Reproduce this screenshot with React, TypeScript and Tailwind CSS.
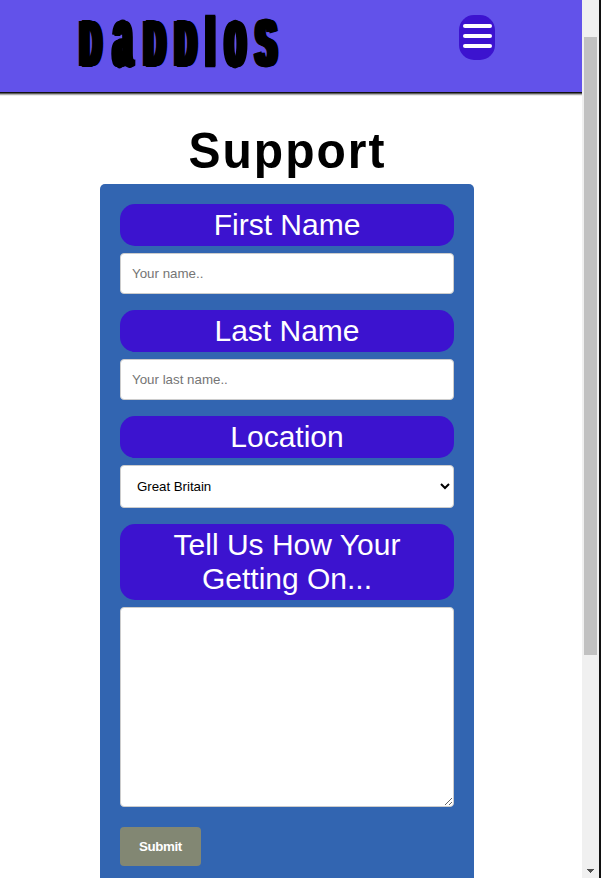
import React from "react";

const heavy =
  "inline-block shrink-0 origin-[50%_51px] text-[60px] leading-[60px] font-bold [-webkit-text-stroke:2px_#000]";
const spread8 =
  "[text-shadow:-2px_0_#000,2px_0_#000,-4px_0_#000,4px_0_#000,-6px_0_#000,6px_0_#000,-7.5px_0_#000,7.5px_0_#000]";
const spread6 =
  "[text-shadow:-2px_0_#000,2px_0_#000,-4px_0_#000,4px_0_#000,-5.5px_0_#000,5.5px_0_#000]";
const spread1 = "[text-shadow:-1px_0_#000,1px_0_#000]";

const letters = [
  { ch: "D", cell: "w-[25px]", shape: `${spread8} scale-x-[0.47] scale-y-[1.085]` },
  { ch: "a", cell: "ml-[6.5px] w-[25px]", shape: `${spread6} scale-x-[0.565] scale-y-[1.4]` },
  { ch: "D", cell: "ml-[7px] w-[25px]", shape: `${spread8} scale-x-[0.47] scale-y-[1.085]` },
  { ch: "D", cell: "ml-[6.5px] w-[25px]", shape: `${spread8} scale-x-[0.47] scale-y-[1.085]` },
  { ch: "I", cell: "ml-[6px] w-[12px]", shape: `${spread1} scale-x-[0.96] scale-y-[1.2]` },
  { ch: "o", cell: "ml-[6px] w-[25px]", shape: `${spread6} scale-x-[0.56] scale-y-[1.4]` },
  { ch: "S", cell: "ml-[6.5px] w-[25px]", shape: `${spread8} scale-x-[0.49] scale-y-[1.1]` },
];

function Logo() {
  return (
    <div className="flex pt-4 pl-[78.5px]">
      {letters.map((l, i) => (
        <span key={i} className={`flex justify-center ${l.cell}`}>
          <span className={`${heavy} ${l.shape}`}>{l.ch}</span>
        </span>
      ))}
    </div>
  );
}

function Label({ children, htmlFor }: { children: React.ReactNode; htmlFor: string }) {
  return (
    <label
      htmlFor={htmlFor}
      className="block rounded-[15px] bg-[#3c13cf] px-10 py-1 text-center text-[30px] leading-[34px] text-white"
    >
      {children}
    </label>
  );
}

const field =
  "mt-[7px] mb-4 block w-full rounded-[4px] border border-[#ccc] bg-white text-[13.333px] outline-none";

export default function App() {
  return (
    <div className="flex h-[878px] w-[601px] overflow-hidden bg-white font-['Liberation_Sans',Arial,sans-serif] text-black">
      <div className="h-full w-[582px] shrink-0">
        <header className="flex h-[92px] items-start justify-between bg-[#6252ea] pr-[87px] shadow-[0_1px_0_#111,0_2px_0_#5c5c5c,0_3px_0_#b0b0b0,0_4px_0_#ececec]">
          <Logo />
          <button
            aria-label="Menu"
            className="mt-[15px] flex h-[45px] w-9 flex-col items-center gap-[6px] rounded-[15px] bg-[#3c13cf] pt-[9px]"
          >
            <span className="h-1 w-[29px] rounded-[2px] bg-white" />
            <span className="h-1 w-[29px] rounded-[2px] bg-white" />
            <span className="h-1 w-[29px] rounded-[2px] bg-white" />
          </button>
        </header>
        <main className="ml-[100px] w-[374px] pt-[31px]">
          <h1 className="h-[61px] origin-[50%_46px] scale-y-[1.04] pl-px text-center text-[48px] leading-[57px] font-bold tracking-[2px] whitespace-nowrap">
            Support
          </h1>
          <form className="h-[720px] rounded-[5px] bg-[#3265b1] p-5">
            <Label htmlFor="fname">First Name</Label>
            <input
              id="fname"
              placeholder="Your name.."
              className={`${field} h-[41px] px-[11px] placeholder:text-[#757575]`}
            />
            <Label htmlFor="lname">Last Name</Label>
            <input
              id="lname"
              placeholder="Your last name.."
              className={`${field} h-[41px] px-[11px] placeholder:text-[#757575]`}
            />
            <Label htmlFor="country">Location</Label>
            <select id="country" className={`${field} h-[43px] pr-[13px] pl-3 tracking-[-0.05px]`}>
              <option>Great Britain</option>
            </select>
            <Label htmlFor="subject">Tell Us How Your Getting On...</Label>
            <textarea id="subject" className={`${field} h-[200px] resize-y p-3`} />
            <button
              type="button"
              className="mt-5 block h-[39px] w-[81px] rounded-[4px] bg-[#828773] text-[13.333px] font-bold tracking-[-0.4px] text-white"
            >
              Submit
            </button>
          </form>
        </main>
      </div>
      <div className="flex h-full w-[17px] shrink-0 flex-col items-center justify-between bg-[#f0f0f0] pt-[37px] pb-[5px]">
        <div className="h-[618px] w-[13px] bg-[#c1c1c1]" />
        <svg width="7" height="4" viewBox="0 0 7 4" shapeRendering="crispEdges">
          <path d="M0 0h7v1H6v1H5v1H4v1H3V3H2V2H1V1H0z" fill="#505050" />
        </svg>
      </div>
      <div className="h-full w-[2px] shrink-0 bg-[#111]" />
    </div>
  );
}
